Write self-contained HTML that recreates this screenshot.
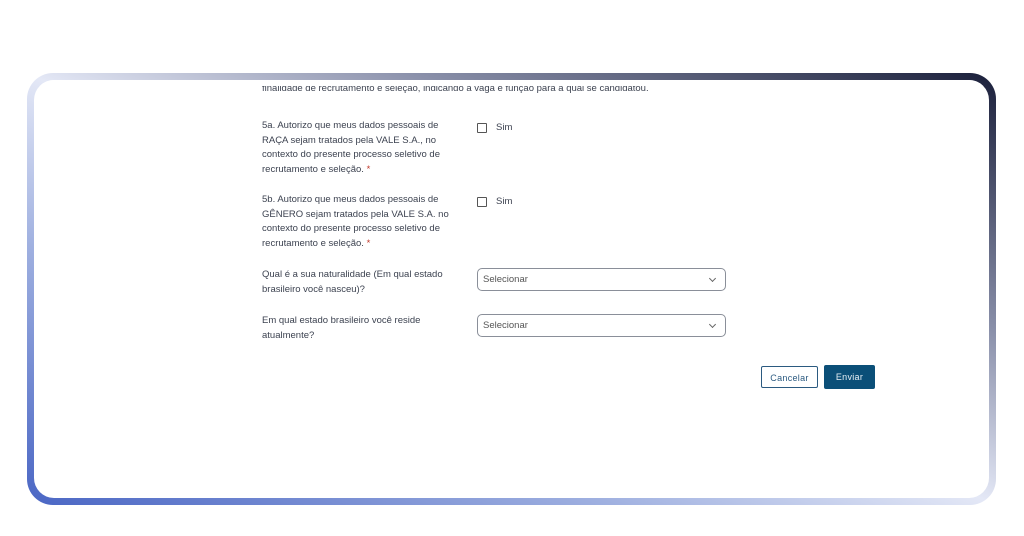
<!DOCTYPE html>
<html><head><meta charset="utf-8"><style>
html,body{margin:0;padding:0;width:1024px;height:536px;background:#fff;overflow:hidden;font-family:"Liberation Sans",sans-serif;}
.frame{position:absolute;left:27px;top:73px;width:969px;height:432px;border-radius:26px;
background:linear-gradient(to top right,#4a66c4 0%,#9fb0e0 30%,#e4e8f6 50%,#8a90aa 70%,#1a1f3a 100%);}
.inner{position:absolute;left:7px;top:7px;right:7px;bottom:7px;background:#fff;border-radius:20px;overflow:hidden;}
.t{position:absolute;font-size:9.5px;color:#3c4250;line-height:14.5px;}
.star{color:#c0392b}
.cb{position:absolute;width:8px;height:8px;border:1px solid #555;border-radius:1px;}
.sim{position:absolute;font-size:9.5px;color:#3c4250;}
.sel{position:absolute;left:443px;width:249px;height:23px;border:1px solid #8a8f99;border-radius:5px;font-size:9.5px;color:#555;line-height:22px;box-sizing:border-box;padding-left:5px;}
.sel:after{content:"";position:absolute;right:10px;top:7px;width:4px;height:4px;border-right:1px solid #666;border-bottom:1px solid #666;transform:rotate(45deg);}
.btn{position:absolute;font-size:9px;height:22px;line-height:22px;text-align:center;box-sizing:border-box;border-radius:2px;letter-spacing:.3px;}
</style></head><body>
<div class="frame"><div class="inner">
<div class="t" style="left:228px;top:2px;">finalidade de recrutamento e seleção, indicando a vaga e função para a qual se candidatou.</div>
<div style="position:absolute;left:0;top:0;width:100%;height:6px;background:#fff"></div>
<div class="t" style="left:228px;top:39px;">5a. Autorizo que meus dados pessoais de<br>RAÇA sejam tratados pela VALE S.A., no<br>contexto do presente processo seletivo de<br>recrutamento e seleção. <span class="star">*</span></div>
<div class="cb" style="left:443px;top:43px"></div><div class="sim" style="left:462px;top:42px">Sim</div>
<div class="t" style="left:228px;top:113px;">5b. Autorizo que meus dados pessoais de<br>GÊNERO sejam tratados pela VALE S.A. no<br>contexto do presente processo seletivo de<br>recrutamento e seleção. <span class="star">*</span></div>
<div class="cb" style="left:443px;top:117px"></div><div class="sim" style="left:462px;top:116px">Sim</div>
<div class="t" style="left:228px;top:188px;">Qual é a sua naturalidade (Em qual estado<br>brasileiro você nasceu)?</div>
<div class="sel" style="top:188px">Selecionar</div>
<div class="t" style="left:228px;top:234px;">Em qual estado brasileiro você reside<br>atualmente?</div>
<div class="sel" style="top:234px">Selecionar</div>
<div class="btn" style="left:727px;top:286px;width:57px;border:1px solid #2b5a80;color:#2b5a80;background:#fff;">Cancelar</div>
<div class="btn" style="left:790px;top:285px;width:51px;height:24px;line-height:24px;background:#0b4f78;color:#e8f0f6;">Enviar</div>
</div></div>
</body></html>
